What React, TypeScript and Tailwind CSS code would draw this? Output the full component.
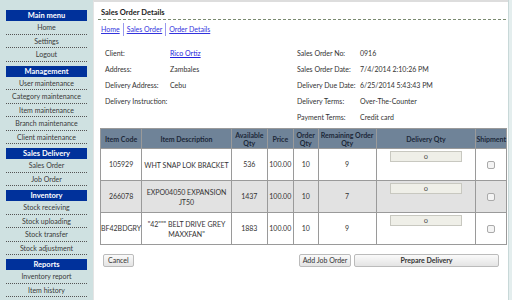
import React from 'react'

type Row = {
  code: string;
  desc: string;
  avail: string;
  price: string;
  order: string;
  remaining: string;
}

const menu: { title: string; items: string[] }[] = [
  { title: 'Main menu', items: ['Home', 'Settings', 'Logout'] },
  { title: 'Management', items: ['User maintenance', 'Category maintenance', 'Item maintenance', 'Branch maintenance', 'Client maintenance'] },
  { title: 'Sales Delivery', items: ['Sales Order', 'Job Order'] },
  { title: 'Inventory', items: ['Stock receiving', 'Stock uploading', 'Stock transfer', 'Stock adjustment'] },
  { title: 'Reports', items: ['Inventory report', 'Item history'] },
]

const rows: Row[] = [
  { code: '105929', desc: 'WHT SNAP LOK BRACKET', avail: '536', price: '100.00', order: '10', remaining: '9' },
  { code: '266078', desc: 'EXPO04050 EXPANSION JT50', avail: '1437', price: '100.00', order: '10', remaining: '7' },
  { code: 'BF42BDGRY', desc: '"42""" BELT DRIVE GREY MAXXFAN"', avail: '1883', price: '100.00', order: '10', remaining: '9' },
]

function Sidebar() {
  return (
    <div className="w-[93px] shrink-0 bg-[#cfe1e1] pt-[10px] px-[6px]">
      {menu.map((m) => (
        <div key={m.title} className="mb-[4px]">
          <div className="h-[11px] bg-[#00319b] text-white font-bold text-[7.5px] leading-[11px] text-center">{m.title}</div>
          {m.items.map((it) => (
            <div key={it} className="h-[13.5px] leading-[13px] text-center text-[7px] text-[#3a3a3a] border-b border-dotted border-[#555]">
              {it}
            </div>
          ))}
        </div>
      ))}
    </div>
  )
}

function Info({ label, value, link }: { label: string; value?: string; link?: boolean }) {
  return (
    <div className="flex h-[16px] items-center">
      <div className="w-[65px] text-[#333]">{label}</div>
      {link ? <a className="text-[#2222dd] underline">{value}</a> : <div className="text-[#333]">{value}</div>}
    </div>
  )
}

function Info2({ label, value }: { label: string; value: string }) {
  return (
    <div className="flex h-[16px] items-center">
      <div className="w-[63px] text-[#333]">{label}</div>
      <div className="text-[#333]">{value}</div>
    </div>
  )
}

export default function App() {
  return (
    <div className="w-[512px] h-[300px] overflow-hidden flex bg-[#cfe1e1]" style={{ fontFamily: 'Lato, "Open Sans", sans-serif' }}>
      <Sidebar />
      <div className="w-[415px] shrink-0 bg-white border-t-2 border-[#ddd] border-l border-l-[#e4e4e4] pl-[4px] pr-[2px]">
        <div className="text-[7.5px] font-bold text-[#222] pt-[5px] pl-[3px] h-[17px]">Sales Order Details</div>
        <div className="border-b border-dashed border-[#7a8a70]"></div>
        <div className="flex items-center text-[7px] mt-[2px] h-[14px] pl-[3px]">
          <a className="text-[#3333dd] underline pr-[2px]">Home</a>
          <div className="w-px h-[13px] bg-[#9999ee] mx-[1px]"></div>
          <a className="text-[#3333dd] underline px-[2px]">Sales Order</a>
          <div className="w-px h-[13px] bg-[#9999ee] mx-[1px]"></div>
          <a className="text-[#3333dd] underline px-[2px]">Order Details</a>
        </div>
        <div className="flex text-[7px] mt-[9px] pl-[7px]">
          <div className="w-[192px]">
            <Info label="Client:" value="Rico Ortiz" link />
            <Info label="Address:" value="Zambales" />
            <Info label="Delivery Address:" value="Cebu" />
            <Info label="Delivery Instruction:" />
          </div>
          <div>
            <Info2 label="Sales Order No:" value="0916" />
            <Info2 label="Sales Order Date:" value="7/4/2014 2:10:26 PM" />
            <Info2 label="Delivery Due Date:" value="6/25/2014 5:43:43 PM" />
            <Info2 label="Delivery Terms:" value="Over-The-Counter" />
            <Info2 label="Payment Terms:" value="Credit card" />
          </div>
        </div>
        <table className="mt-[3px] ml-[2px] border-collapse text-[7px] text-[#333] w-[407px]">
          <thead>
            <tr className="bg-[#6f8398] text-[#1c2838] font-bold h-[20px]">
              <th className="w-[38px] border border-[#9a9a9a] leading-[8px]">Item Code</th>
              <th className="w-[90px] border border-[#9a9a9a] leading-[8px]">Item Description</th>
              <th className="w-[36px] border border-[#9a9a9a] leading-[8px]">Available Qty</th>
              <th className="w-[26px] border border-[#9a9a9a] leading-[8px]">Price</th>
              <th className="w-[25px] border border-[#9a9a9a] leading-[8px]">Order Qty</th>
              <th className="w-[58px] border border-[#9a9a9a] leading-[8px] px-0">Remaining Order Qty</th>
              <th className="w-[100px] border border-[#9a9a9a] leading-[8px]">Delivery Qty</th>
              <th className="border border-[#9a9a9a] leading-[8px]">Shipment</th>
            </tr>
          </thead>
          <tbody>
            {rows.map((r, i) => (
              <tr key={r.code} className={(i === 1 ? 'bg-[#e2e2e2]' : 'bg-white') + ' h-[32px] text-center'}>
                <td className="border border-[#9a9a9a]">{r.code}</td>
                <td className="border border-[#9a9a9a] px-[2px] leading-[10px]">{r.desc}</td>
                <td className="border border-[#9a9a9a]">{r.avail}</td>
                <td className="border border-[#9a9a9a]">{r.price}</td>
                <td className="border border-[#9a9a9a]">{r.order}</td>
                <td className="border border-[#9a9a9a]">{r.remaining}</td>
                <td className="border border-[#9a9a9a] align-top pt-[2px]">
                  <div className="mx-auto w-[72px] h-[11px] bg-[#efefe8] border border-[#c8c8c0] text-[6.5px] leading-[9px]">0</div>
                </td>
                <td className="border border-[#9a9a9a]">
                  <div className="mx-auto w-[8px] h-[8px] rounded-[2px] border border-[#aaa] bg-[#f4f4f4]"></div>
                </td>
              </tr>
            ))}
          </tbody>
        </table>
        <div className="flex items-center mt-[9px] pl-[5px] pr-[7px] text-[7px] text-[#333]">
          <button className="h-[13px] px-[4px] border border-[#bbb] rounded-[2px] bg-gradient-to-b from-[#fafafa] to-[#e4e4e4] leading-[11px]">Cancel</button>
          <div className="flex-1"></div>
          <button className="h-[13px] w-[52px] border border-[#bbb] rounded-[2px] bg-gradient-to-b from-[#fafafa] to-[#e4e4e4] leading-[11px]">Add Job Order</button>
          <button className="ml-[3px] h-[13px] w-[145px] border border-[#bbb] rounded-[2px] bg-gradient-to-b from-[#fafafa] to-[#e4e4e4] font-bold leading-[11px]">Prepare Delivery</button>
        </div>
      </div>
      <div className="flex-1 bg-[#e4eeee] border-l border-[#c8d8d8]"></div>
    </div>
  )
}
